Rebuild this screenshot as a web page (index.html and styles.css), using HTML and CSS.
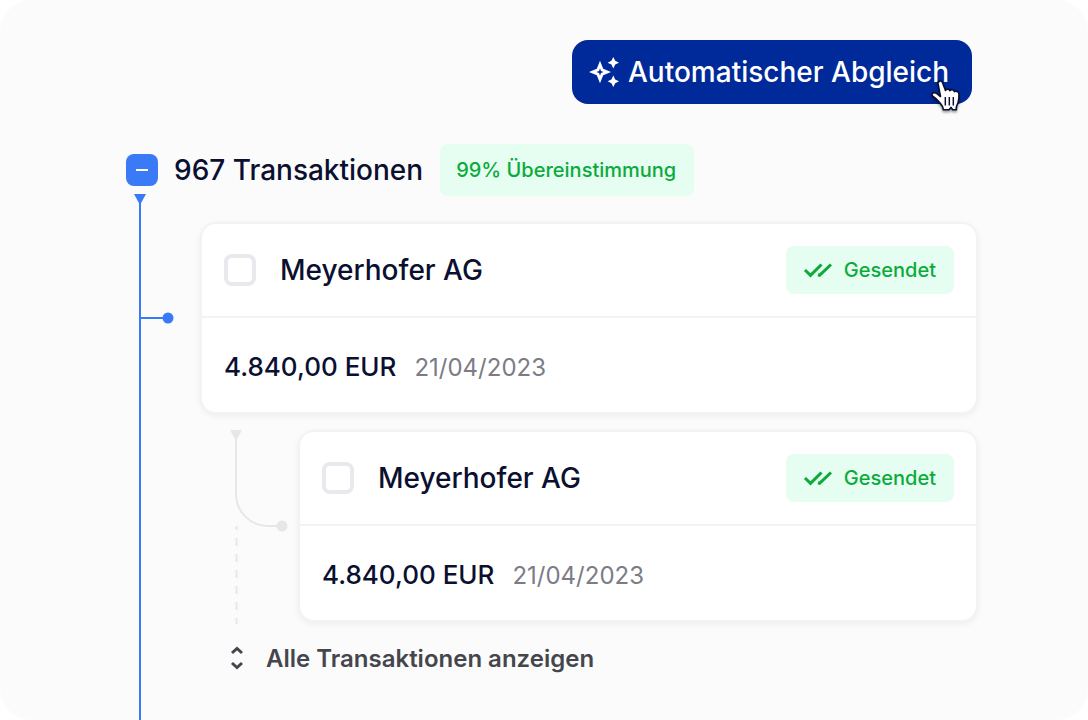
FILE: index.html
```html
<!DOCTYPE html>
<html lang="de">
<head>
    <meta charset="UTF-8">
    <meta name="viewport" content="width=device-width, initial-scale=1">
    <title>Transaktionen</title>
    <link rel="stylesheet" href="styles.css">
</head>
<body>
<main class="panel">
    <button type="button" class="match-button">
        <svg width="32" height="32" viewBox="0 0 32 32" fill="currentColor" aria-hidden="true">
            <path fill-rule="evenodd" d="M12 4.8 L15.2 12.8 L23 16 L15.2 19.2 L12 27.2 L8.8 19.2 L1 16 L8.8 12.8 Z M12 12.6 L11 15 L8.6 16 L11 17 L12 19.4 L13 17 L15.4 16 L13 15 Z"/>
            <path d="M25.3 1 L27.2 4.8 L31 6.7 L27.2 8.6 L25.3 12.4 L23.4 8.6 L19.6 6.7 L23.4 4.8 Z"/>
            <path d="M25.3 19.6 L27.2 23.4 L31 25.3 L27.2 27.2 L25.3 31 L23.4 27.2 L19.6 25.3 L23.4 23.4 Z"/>
        </svg>
        <span>Automatischer Abgleich</span>
        <svg class="cursor" width="36" height="40" viewBox="0 0 34 38" aria-hidden="true">
            <path d="M8.5 8.5 C8 5.5 11.6 4.6 12.8 7.4 L15.6 14.6 C16.4 13 19 13 19.8 14.8 C21 13.4 23.4 13.8 24 15.8 C25.6 14.8 28.4 15.6 28.4 18.2 C28.4 22 28.4 25.4 26.6 28.4 C26 29.4 25.8 30.4 25.8 33 L22.4 33 L20.8 30.8 L19 33 L13.6 33 C13.6 30.8 12.4 29 10.8 27.2 C8.4 24.6 7 22.4 3.8 20.4 C1.4 18.8 3.4 15.8 6.4 17.2 C8 18 9.2 19.2 10.8 20.4 Z" fill="#fff" stroke="#0b1030" stroke-width="1.6" stroke-linejoin="round"/>
            <path d="M15.4 21 V29 M19.2 21 V29 M23 21 V29" stroke="#0b1030" stroke-width="1.4"/>
        </svg>
    </button>

    <section class="tree">
        <div class="rail-col">
            <button type="button" class="toggle" aria-label="Einklappen">
                <svg width="14" height="2" aria-hidden="true"><rect x="1" width="12" height="2" fill="#fff"/></svg>
            </button>
            <div class="rail">
                <svg class="rail-arrow" width="12" height="12" aria-hidden="true"><path d="M0 0 H12 L6 11 Z" fill="currentColor"/></svg>
                <svg class="rail-branch" width="34" height="12" aria-hidden="true"><path d="M0 5 H24 V7 H0 Z" fill="currentColor"/><circle cx="27" cy="6" r="5.5" fill="currentColor"/></svg>
            </div>
        </div>

        <div class="tree-main">
            <header class="tree-head">
                <h1 class="title">967 Transaktionen</h1>
                <span class="score">99% Übereinstimmung</span>
            </header>

            <div class="list">
                <article class="card">
                    <div class="card-head">
                        <label class="pick"><input type="checkbox" class="check"><span>Meyerhofer AG</span></label>
                        <span class="status">
                            <svg width="32" height="24" viewBox="0 0 32 24" fill="none" stroke="currentColor" stroke-width="3" aria-hidden="true"><path d="M3 12 L8.5 17.3 L19.5 6.5 M16 16.8 L17.6 17.3 L29 6.5"/></svg>
                            Gesendet
                        </span>
                    </div>
                    <div class="card-body">
                        <span class="amount">4.840,00 EUR</span>
                        <time class="date" datetime="2023-04-21">21/04/2023</time>
                    </div>
                </article>

                <div class="child">
                    <svg class="child-line" width="60" height="196" viewBox="0 0 60 196" fill="none" stroke="currentColor" stroke-width="2" aria-hidden="true">
                        <path d="M2 0 H14 L8 11 Z" fill="currentColor" stroke="none"/>
                        <path d="M8 8 V64 A32 32 0 0 0 40 96 H52"/>
                        <circle cx="54" cy="96" r="5.5" fill="currentColor" stroke="none"/>
                        <path d="M8.5 96 V194" stroke-dasharray="8 8" stroke-dashoffset="4"/>
                    </svg>
                    <article class="card">
                        <div class="card-head">
                            <label class="pick"><input type="checkbox" class="check"><span>Meyerhofer AG</span></label>
                            <span class="status">
                                <svg width="32" height="24" viewBox="0 0 32 24" fill="none" stroke="currentColor" stroke-width="3" aria-hidden="true"><path d="M3 12 L8.5 17.3 L19.5 6.5 M16 16.8 L17.6 17.3 L29 6.5"/></svg>
                                Gesendet
                            </span>
                        </div>
                        <div class="card-body">
                            <span class="amount">4.840,00 EUR</span>
                            <time class="date" datetime="2023-04-21">21/04/2023</time>
                        </div>
                    </article>
                </div>

                <button type="button" class="show-all">
                    <svg width="14" height="24" viewBox="0 0 14 24" fill="none" stroke="currentColor" stroke-width="3" aria-hidden="true"><path d="M2 7 L7 2.5 L12 7 M2 17 L7 21.5 L12 17"/></svg>
                    Alle Transaktionen anzeigen
                </button>
            </div>
        </div>
    </section>
</main>
</body>
</html>
```
FILE: styles.css
```css
* {
    box-sizing: border-box;
}
body {
    margin: 0;
    background-color: #fff;
    color: #0b1030;
    font-family: Inter, "Liberation Sans", sans-serif;
    font-weight: 500;
}
button {
    border: none;
    padding: 0;
    background: none;
    font: inherit;
    cursor: pointer;
}
svg {
    display: block;
    flex: none;
}
.panel {
    display: flex;
    flex-direction: column;
    min-height: 100vh;
    padding: 40px 110px 0 126px;
    border-radius: 32px;
    background-color: #fbfbfb;
}
.match-button {
    position: relative;
    display: flex;
    align-items: center;
    align-self: flex-end;
    gap: 8px;
    min-width: 400px;
    height: 64px;
    margin-right: 6px;
    padding: 0 16px;
    border-radius: 16px;
    background-color: #002999;
    color: #fff;
    font-size: 28px;
}
.cursor {
    position: absolute;
    right: 7px;
    bottom: -11px;
    filter: drop-shadow(0 2px 1px rgba(0, 0, 0, 0.35));
}
.tree {
    display: flex;
    flex: 1;
    margin-top: 40px;
}
.rail-col {
    display: flex;
    flex-direction: column;
    flex: none;
    gap: 8px;
    width: 48px;
    padding-top: 10px;
    color: #3b7af7;
}
.toggle {
    display: flex;
    align-items: center;
    justify-content: center;
    width: 32px;
    height: 32px;
    border-radius: 8px;
    background-color: #3b7af7;
}
.rail {
    position: relative;
    flex: 1;
    margin-left: 13px;
    padding-top: 118px;
    border-left: 2px solid #3b7af7;
}
.rail-arrow {
    position: absolute;
    top: 0;
    left: -7px;
}
.tree-main {
    flex: 1;
}
.tree-head {
    display: flex;
    align-items: center;
    gap: 17px;
    height: 52px;
}
.title {
    margin: 0;
    font-size: 28px;
    font-weight: 500;
}
.score {
    padding: 1px 18px 0 16px;
    border-radius: 8px;
    background-color: #e6fdf1;
    color: #0aab3c;
    font-size: 20px;
    line-height: 51px;
}
.list {
    padding: 26px 0 0 26px;
}
.card {
    flex: 1;
    border: 2px solid #f3f3f4;
    border-radius: 16px;
    background-color: #fff;
    box-shadow: 0 2px 6px rgba(0, 0, 0, 0.06);
}
.card-head {
    display: flex;
    align-items: center;
    justify-content: space-between;
    height: 94px;
    padding: 0 22px;
    border-bottom: 2px solid #f3f3f4;
}
.pick {
    display: flex;
    align-items: center;
    gap: 24px;
    font-size: 28px;
}
.check {
    appearance: none;
    width: 32px;
    height: 32px;
    margin: 0;
    border: 4px solid #e8e8ed;
    border-radius: 8px;
    background-color: #fff;
}
.check:checked {
    background-color: #3b7af7;
}
.status {
    display: flex;
    align-items: center;
    gap: 10px;
    height: 48px;
    padding: 0 18px 0 16px;
    border-radius: 8px;
    background-color: #e6fdf1;
    color: #0aab3c;
    font-size: 20px;
}
.card-body {
    display: flex;
    align-items: baseline;
    gap: 18px;
    height: 94px;
    padding: 30px 22px 0;
    line-height: 38px;
}
.amount {
    font-size: 26px;
}
.date {
    color: #7c7c85;
    font-size: 24px;
    font-weight: 400;
}
.child {
    display: flex;
    align-items: flex-start;
    gap: 10px;
    margin-top: 16px;
    padding-left: 28px;
}
.child-line {
    color: #e6e7e9;
}
.show-all {
    display: flex;
    align-items: center;
    gap: 22px;
    height: 32px;
    margin: 16px 0 0 30px;
    color: #45464d;
    font-size: 24px;
    font-weight: 600;
}
```
